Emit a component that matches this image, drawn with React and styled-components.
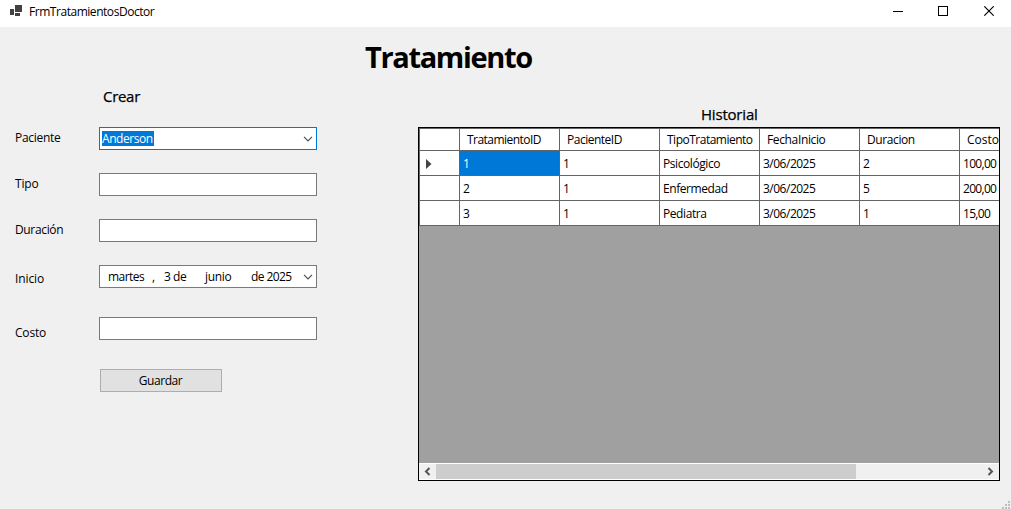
import React from "react";
import styled, { createGlobalStyle } from "styled-components";

const GlobalStyle = createGlobalStyle`
  *, *::before, *::after { box-sizing: border-box; }
  html, body { margin: 0; padding: 0; overflow: hidden; }
  body { font-family: "Open Sans", "Noto Sans", sans-serif; font-size: 12px; line-height: 16px; color: #000; }
`;

const Window = styled.div`
  width: 1011px;
  height: 509px;
  display: flex;
  flex-direction: column;
  background: #f0f0f0;
  position: relative;
  overflow: hidden;
`;

const TitleBar = styled.header`
  height: 27px;
  flex: none;
  display: flex;
  align-items: flex-start;
  background: #fff;
  padding: 4px 0 0 10px;
`;

const AppIcon = styled.svg`
  display: block;
  width: 12px;
  height: 12px;
  margin: 1px 7px 0 0;
`;

const Caption = styled.div`
  flex: 1;
`;

const WindowButtons = styled.div`
  display: flex;
  gap: 35px;
  padding: 2px 17px 0 0;
  svg { display: block; }
`;

const Text = styled.span`
  letter-spacing: ${(p) => p.$ls ?? -0.46}px;
  white-space: pre;
`;

const Title = styled.h1`
  margin: 0;
  height: 59px;
  padding: 10px 0 0 365px;
  font-size: 29px;
  line-height: 40px;
  font-weight: 700;
  letter-spacing: -1.35px;
`;

const Content = styled.main`
  display: flex;
  gap: 101px;
  padding-left: 15px;
`;

const Form = styled.form`
  width: 302px;
`;

const SectionTitle = styled.h2`
  margin: 0;
  font-size: 15px;
  line-height: 20px;
  font-weight: 500;
  padding-left: ${(p) => p.$indent}px;
  letter-spacing: ${(p) => p.$ls}px;
  -webkit-text-stroke: 0.25px #000;
`;

const Field = styled.div`
  display: flex;
  margin-top: ${(p) => p.$gap}px;
  height: 23px;
`;

const Label = styled.label`
  width: 84px;
  padding-top: ${(p) => p.$drop}px;
`;

const Box = styled.div`
  width: 218px;
  height: 23px;
  display: flex;
  align-items: center;
  background: #fff;
  border: 1px solid ${(p) => (p.$focused ? "#0078d7" : "#7a7a7a")};
  padding: 0 3px 0 2px;
`;

const Selection = styled.span`
  height: 15px;
  line-height: 15px;
  width: 52px;
  background: #0078d7;
  color: #fff;
`;

const DateParts = styled.div`
  display: grid;
  grid-template-columns: 44px 12px 41px 46px 44px;
  padding-left: 6px;
`;

const Chevron = styled.svg`
  width: 10px;
  height: 6px;
  margin-left: auto;
`;

const Button = styled.button`
  display: flex;
  justify-content: center;
  align-items: center;
  width: 122px;
  height: 23px;
  margin: 29px 0 0 85px;
  padding: 0 1px 0 0;
  border: 1px solid #adadad;
  background: #e1e1e1;
  color: #000;
  font: inherit;
`;

const History = styled.section`
  width: 582px;
  padding-top: 18px;
`;

const Grid = styled.div`
  height: 354px;
  margin-top: 3px;
  display: flex;
  flex-direction: column;
  border: 1px solid #000;
  background: #a0a0a0;
`;

const Rows = styled.div`
  flex: 1;
  overflow: hidden;
  border-top: 1px solid #646464;
`;

const Row = styled.div`
  display: grid;
  grid-template-columns: 41px repeat(6, 100px);
  height: ${(p) => (p.$head ? 22 : 25)}px;
`;

const Cell = styled.div`
  display: flex;
  align-items: center;
  overflow: hidden;
  padding-left: ${(p) => (p.$head ? 7 : 3)}px;
  padding-top: ${(p) => (p.$head ? 0 : 1)}px;
  background: ${(p) => (p.$selected ? "#0078d7" : "#fff")};
  color: ${(p) => (p.$selected ? "#fff" : "#000")};
  border-right: 1px solid #646464;
  border-bottom: 1px solid #646464;
`;

const RowHeader = styled(Cell)`
  border-left: 1px solid #646464;
  padding-left: 6px;
  padding-top: 2px;
`;

const ScrollBar = styled.div`
  height: 17px;
  flex: none;
  display: flex;
  align-items: center;
  background: #f0f0f0;
  border-top: 1px solid #fff;
  border-bottom: 1px solid #fff;
`;

const ScrollArrow = styled.svg`
  width: 17px;
  height: 15px;
  flex: none;
`;

const Track = styled.div`
  flex: 1;
  height: 15px;
`;

const Thumb = styled.div`
  width: 420px;
  height: 15px;
  background: #cdcdcd;
`;

const Grip = styled.svg`
  position: absolute;
  right: 1px;
  bottom: 0;
  width: 8px;
  height: 8px;
`;

const DownArrow = () => (
  <Chevron viewBox="0 0 10 6">
    <path d="M1 .8 5 4.8 9 .8" fill="none" stroke="#505050" strokeWidth="1.2" />
  </Chevron>
);

const columns = [
  ["TratamientoID", -0.54],
  ["PacienteID", -0.5],
  ["TipoTratamiento", -0.5],
  ["FechaInicio", -0.36],
  ["Duracion", -0.4],
  ["CostoTotal", 0],
];

const records = [
  ["1", "1", "Psicológico", "3/06/2025", "2", "100,00"],
  ["2", "1", "Enfermedad", "3/06/2025", "5", "200,00"],
  ["3", "1", "Pediatra", "3/06/2025", "1", "15,00"],
];

export default function App() {
  return (
    <Window>
      <GlobalStyle />
      <TitleBar>
        <AppIcon viewBox="0 0 12 12" shapeRendering="crispEdges" fill="#424242">
          <path d="M5 0h7v7H5zM0 4h4v6H0zM5 8h5v3H5z" />
        </AppIcon>
        <Caption><Text>FrmTratamientosDoctor</Text></Caption>
        <WindowButtons>
          <svg width="10" height="11" shapeRendering="crispEdges"><path d="M0 5h10v1H0z" /></svg>
          <svg width="10" height="11" shapeRendering="crispEdges"><path d="M.5 .5h9v9h-9z" fill="none" stroke="#000" /></svg>
          <svg width="11" height="10"><path d="M1.3 .3l9.4 9.4M10.7 .3l-9.4 9.4" fill="none" stroke="#000" strokeWidth="1.1" /></svg>
        </WindowButtons>
      </TitleBar>
      <Title>Tratamiento</Title>
      <Content>
        <Form>
          <SectionTitle $indent={88} $ls={-0.3}>Crear</SectionTitle>
          <Field $gap={21}>
            <Label $drop={3}><Text $ls={-0.3}>Paciente</Text></Label>
            <Box $focused>
              <Selection><Text>Anderson</Text></Selection>
              <DownArrow />
            </Box>
          </Field>
          <Field $gap={23}>
            <Label $drop={3}><Text $ls={-0.2}>Tipo</Text></Label>
            <Box />
          </Field>
          <Field $gap={23}>
            <Label $drop={3}><Text $ls={-0.35}>Duración</Text></Label>
            <Box />
          </Field>
          <Field $gap={23}>
            <Label $drop={6}><Text $ls={-0.1}>Inicio</Text></Label>
            <Box>
              <DateParts>
                <Text $ls={-0.55}>martes</Text>
                <Text>,</Text>
                <Text>3 de</Text>
                <Text $ls={-0.3}>junio</Text>
                <Text $ls={-0.6}>de 2025</Text>
              </DateParts>
              <DownArrow />
            </Box>
          </Field>
          <Field $gap={29}>
            <Label $drop={8}><Text $ls={-0.2}>Costo</Text></Label>
            <Box />
          </Field>
          <Button type="button"><Text>Guardar</Text></Button>
        </Form>
        <History>
          <SectionTitle $indent={283} $ls={-0.2}>Historial</SectionTitle>
          <Grid>
            <Rows>
              <Row $head>
                <RowHeader />
                {columns.map(([name, ls]) => (
                  <Cell $head key={name}><Text $ls={ls}>{name}</Text></Cell>
                ))}
              </Row>
              {records.map((record, r) => (
                <Row key={r}>
                  <RowHeader>
                    {r === 0 && (
                      <svg width="6" height="10"><path d="M0 0l5.5 5L0 10z" fill="#444" /></svg>
                    )}
                  </RowHeader>
                  {record.map((value, c) => (
                    <Cell key={c} $selected={r === 0 && c === 0}>
                      <Text $ls={c === 5 ? -0.7 : c === 2 ? -0.42 : -0.5}>{value}</Text>
                    </Cell>
                  ))}
                </Row>
              ))}
            </Rows>
            <ScrollBar>
              <ScrollArrow viewBox="0 0 17 15"><path d="M10.5 4 7 7.5l3.5 3.5" fill="none" stroke="#555" strokeWidth="2" /></ScrollArrow>
              <Track><Thumb /></Track>
              <ScrollArrow viewBox="0 0 17 15"><path d="M6.5 4 10 7.5 6.5 11" fill="none" stroke="#555" strokeWidth="2" /></ScrollArrow>
            </ScrollBar>
          </Grid>
        </History>
      </Content>
      <Grip viewBox="0 0 8 8" shapeRendering="crispEdges" fill="#bfbfbf">
        <path d="M6 0h2v2H6zM3 3h2v2H3zM6 3h2v2H6zM0 6h2v2H0zM3 6h2v2H3zM6 6h2v2H6z" />
      </Grip>
    </Window>
  );
}
